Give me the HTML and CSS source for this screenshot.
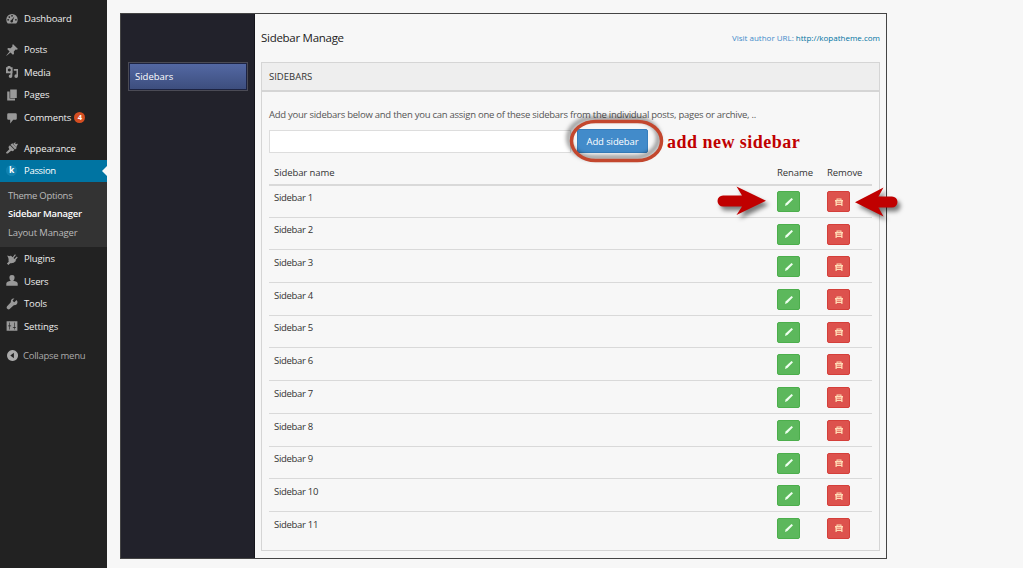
FILE: index.html
```
<!DOCTYPE html>
<html lang="en">
<head>
<meta charset="utf-8">
<title>Sidebar Manager</title>
<link rel="stylesheet" href="styles.css">
</head>
<body>
<svg class="defs" aria-hidden="true">
  <symbol id="dash" viewBox="0 0 20 20"><path fill-rule="evenodd" d="M3 17.500A9.500 9.500 0 1 1 17 17.500ZM10 3.500a1.300 1.300 0 1 0 .1 0ZM5.500 5.500a1.300 1.300 0 1 0 .1 0ZM3.500 10a1.300 1.300 0 1 0 .1 0ZM16.500 10a1.300 1.300 0 1 0 .1 0ZM14 6l-5 5.500a2.200 2.200 0 1 0 2.500 1.200Z"/></symbol>
  <symbol id="pin" viewBox="0 0 20 20"><path d="M11.500 0 20 8.500l-2.500 1-1.500-.2-3 3 .3 4.200-1.800 1.500-4-4L1 19.500.5 19 6 12.500l-4-4L3.500 6.700l4.200.3 3-3L10.500 2.500Z"/></symbol>
  <symbol id="media" viewBox="0 0 20 20"><path fill-rule="evenodd" d="M0 2h2l1-2h4l1 2h3v10H0ZM5.500 4a2.500 2.500 0 1 0 .1 0ZM13 5h7v12a3 3 0 1 1-2.500-3V8H13ZM7.500 12h3v5a3 3 0 1 1-3-3Z"/></symbol>
  <symbol id="pages" viewBox="0 0 20 20"><path d="M7 1h11v14H7ZM2 4h4v12h9v3H2Z"/></symbol>
  <symbol id="comment" viewBox="0 0 20 20"><path d="M4 2h12q2 0 2 2v7q0 2-2 2h-4l-5 6v-6H4q-2 0-2-2V4q0-2 2-2Z"/></symbol>
  <symbol id="brush" viewBox="0 0 20 20"><path d="m10.500 2 7.500 8-3 2.500-7.500-8ZM6.500 5.500l7.500 7.500-2.500 2.500-3-1L3 19q-3 1-3-1.500L5.500 12 4 8.500Z"/><path d="m12 3 4-3-.5 3.500L20 3l-3 6Z"/></symbol>
  <symbol id="plug" viewBox="0 0 20 20"><path d="m8 4 3 3 4-5 1.500 1.500-4 5 1.500 1.500 4-4L19.500 7.500l-4 4.500 1.500 1q-5 5-10 4l-3 3-2.500-2.500 3-3Q3 9 8 4Z"/><path d="M2 4 8 6 5 11Z"/></symbol>
  <symbol id="user" viewBox="0 0 20 20"><path d="M10 0a4.300 4.300 0 0 1 4.300 4.500q0 3-2.300 5 7 1 7.500 4.500v4H.5v-4Q1 10.500 8 9.500 5.700 7.500 5.700 4.500A4.300 4.300 0 0 1 10 0Z"/></symbol>
  <symbol id="wrench" viewBox="0 0 20 20"><path d="M17.500 3.500 14 7l-2-1-1-2 3-3Q8 0 8 7L1.500 14q-1.500 3 1 4.500t4-.5L13 12q7 0 6-6Z"/></symbol>
  <symbol id="settings" viewBox="0 0 20 20"><path fill-rule="evenodd" d="M1 2h18v16H1ZM5.500 4v5H3.500v1.500h2V16h1v-5.500h2V9h-2V4ZM13.500 4v7.500h-2V13h2v3h1v-3h2v-1.500h-2V4Z"/></symbol>
  <symbol id="collapse" viewBox="0 0 20 20"><path fill-rule="evenodd" d="M10 0a10 10 0 1 0 .1 0ZM12.500 5v10L6 10Z"/></symbol>
  <symbol id="pencil" viewBox="0 0 10 10"><path d="M7.500 1 9 2.300 3.400 8 1 9 1.600 6.600Z"/></symbol>
  <symbol id="trash" viewBox="0 0 10 10"><path fill="currentColor" d="M1 3h1.500V1.500h5V3H9v1.500H8.500V9h-1.200V8H2.700v1H1.500V4.500H1ZM3.500 2.500V3h3v-.5ZM2.800 4.500v.7h4.400v-.7ZM2.800 6.200V7h4.400v-.8Z" fill-rule="evenodd"/></symbol>
</svg>
<div class="page">
  <nav class="menu">
    <a class="item dashboard"><svg class="icon"><use href="#dash"/></svg><span>Dashboard</span></a>
    <a class="item"><svg class="icon"><use href="#pin"/></svg><span>Posts</span></a>
    <a class="item"><svg class="icon"><use href="#media"/></svg><span>Media</span></a>
    <a class="item"><svg class="icon"><use href="#pages"/></svg><span>Pages</span></a>
    <a class="item spaced"><svg class="icon"><use href="#comment"/></svg><span>Comments</span><b class="count">4</b></a>
    <a class="item"><svg class="icon"><use href="#brush"/></svg><span>Appearance</span></a>
    <a class="item current"><b class="kopa">k</b><span>Passion</span></a>
    <div class="submenu"><a>Theme Options</a><a class="active">Sidebar Manager</a><a>Layout Manager</a></div>
    <a class="item"><svg class="icon"><use href="#plug"/></svg><span>Plugins</span></a>
    <a class="item"><svg class="icon"><use href="#user"/></svg><span>Users</span></a>
    <a class="item"><svg class="icon"><use href="#wrench"/></svg><span>Tools</span></a>
    <a class="item"><svg class="icon"><use href="#settings"/></svg><span>Settings</span></a>
    <a class="item collapse"><svg class="icon"><use href="#collapse"/></svg><span>Collapse menu</span></a>
  </nav>
  <div class="frame">
    <aside class="tabs"><a class="tab">Sidebars</a></aside>
    <main class="main">
      <header class="top"><h1>Sidebar Manage</h1><p class="author">Visit author URL: <a>http://kopatheme.com</a></p></header>
      <section class="panel">
        <h2>SIDEBARS</h2>
        <div class="body">
          <p class="intro">Add your sidebars below and then you can assign one of these sidebars from the individual posts, pages or archive, ..</p>
          <div class="form"><input class="field" type="text" aria-label="Sidebar name"><button class="add">Add sidebar</button></div>
          <div class="row head"><span>Sidebar name</span><span>Rename</span><span>Remove</span></div>
          <div id="rows"></div>
        </div>
      </section>
    </main>
  </div>
</div>
<svg class="notes" viewBox="0 0 1023 568" aria-hidden="true">
  <g class="ring-shadow"><rect class="ring" x="571.500" y="121.500" width="90" height="39" rx="24" ry="19.500"/></g>
  <g class="arrow">
    <path d="M723 195.500H742L736.500 186.500 766 200.700 736.500 215 742 206.500H723A5.500 5.500 0 0 1 723 195.500Z"/>
    <path d="M892 196.500H878.500L883.500 187.500 855 202.300 883.500 216.500 878.500 207.500H892A5.500 5.500 0 0 0 892 196.500Z"/>
  </g>
</svg>
<div class="callout">add new sidebar</div>
<script src="rows.js"></script>
</body>
</html>
```
FILE: styles.css
```
* { box-sizing: border-box; }
body { margin: 0; background: #f7f7f7; font-family: "Open Sans", sans-serif; font-size: 9.5px; color: #333; overflow: hidden; }
h1, h2, p { margin: 0; font-weight: 400; }
.defs { display: none; }
.page { display: flex; height: 568px; }

.menu { width: 107px; flex: none; padding-top: 7.500px; background: #222; color: #eee; letter-spacing: -.14px; }
.item { display: flex; align-items: center; height: 22.670px; padding-left: 6px; gap: 6px; white-space: nowrap; position: relative; }
.item.dashboard { margin-bottom: 8.200px; }
.item.spaced { margin-bottom: 7.900px; }
.icon { width: 12px; height: 12px; fill: #999; flex: none; }
.count { width: 11px; height: 11px; margin-left: -3px; border-radius: 50%; background: #d54e21; color: #fff; font-size: 7.500px; line-height: 11px; text-align: center; }
.current { background: #0074a2; color: #fff; letter-spacing: -.3px; }
.current::after { content: ""; position: absolute; right: 0; top: 6px; border: 5px solid transparent; border-right-color: #f7f7f7; border-left: 0; }
.kopa { width: 11px; height: 11px; margin-right: 1px; border-radius: 50%; background: #1082b0; color: #fff; font-size: 8.500px; line-height: 10px; text-align: center; }
.submenu { display: flex; flex-direction: column; height: 65px; padding: 4.500px 0 0 8px; background: #333; color: #bbb; letter-spacing: -.28px; }
.submenu a { line-height: 18.500px; white-space: nowrap; }
.submenu .active { color: #fff; font-weight: 600; }
.submenu a:last-child { letter-spacing: -.16px; }
.collapse { margin-top: 6.200px; color: #aaa; gap: 5px; letter-spacing: -.26px; }
.collapse .icon { width: 11px; height: 11px; fill: #aaa; margin-left: 1px; }

.frame { display: flex; width: 767px; height: 546px; margin: 13px 0 0 13px; border: 1px solid #444; }
.tabs { width: 134px; flex: none; padding: 48px 6px 0 7px; background: #22222b; border-right: 1px solid #15151b; }
.tab { display: flex; align-items: center; height: 29px; padding-left: 6px; border: 1px solid #4b4b55; color: #fff; background: linear-gradient(#5469a5, #3c4d7c); box-shadow: inset 0 0 0 1px #1c2342; }
.main { flex: 1; padding: 0 6px 0 6px; }
.top { display: flex; justify-content: space-between; align-items: center; height: 48px; }
h1 { font-size: 11.500px; color: #222; letter-spacing: -.28px; margin-top: -2px; }
.author { font-size: 8px; color: #428bca; margin-top: -1px; }
.author a { color: #0074a2; }
.panel { height: 489px; border: 1px solid #d5d5d5; }
h2 { height: 29px; padding-left: 7px; line-height: 27px; font-size: 9.500px; background: #eee; border-bottom: 2px solid #d5d5d5; }
.body { padding: 15px 7px 0; }
.intro { line-height: 15px; color: #555; white-space: nowrap; letter-spacing: -.255px; }
.form { display: flex; align-items: flex-start; gap: 6px; margin-top: 7px; height: 26px; }
.field { width: 302px; height: 23px; margin-top: 1px; border: 1px solid #ddd; background: #fff; padding: 0 4px; }
.add { width: 71px; height: 24px; padding: 0; border: 1px solid #357ebd; border-radius: 2px; background: #428bca; color: #fff; font: 9.500px "Open Sans", sans-serif; letter-spacing: -.1px; }
.row { display: grid; grid-template-columns: 503px 50px 45px; height: 32.700px; padding: 6px 0 0 5px; border-top: 1px solid #d9d9d9; }
.row > span { line-height: 15px; margin-top: -1.300px; letter-spacing: -.3px; }
.row.head { height: 29px; padding-top: 10px; border: 0; }
.row.head > span { margin-top: 0; letter-spacing: -.08px; }
#rows .row:first-child { border-top-width: 2px; padding-top: 5px; }
.btn { display: flex; align-items: center; justify-content: center; width: 23px; height: 21px; border-radius: 2px; color: #fff; }
.btn svg { width: 10px; height: 10px; }
.rename { background: #5cb85c; border: 1px solid #4cae4c; fill: #effff0; }
.remove { background: #dd524d; border: 1px solid #d43f3a; color: #ffdcb5; }

.notes { position: absolute; inset: 0; width: 1023px; height: 568px; pointer-events: none; }
.ring { fill: none; stroke: #c3472e; stroke-width: 3.500; }
.ring-shadow { filter: drop-shadow(-3px -3px 2px rgba(0, 0, 0, .5)); }
.arrow { fill: #c00000; filter: drop-shadow(3px 4px 2px rgba(0, 0, 0, .5)); }
.callout { position: absolute; left: 667px; top: 132px; font: bold 18px/21px "Liberation Serif", serif; letter-spacing: .48px; color: #c00000; white-space: nowrap; }
```
FILE: rows.js
```
const rows = document.getElementById("rows");
for (let i = 1; i <= 11; i++) {
  rows.insertAdjacentHTML("beforeend", `<div class="row"><span>Sidebar ${i}</span><a class="btn rename"><svg><use href="#pencil"/></svg></a><a class="btn remove"><svg><use href="#trash"/></svg></a></div>`);
}
```
